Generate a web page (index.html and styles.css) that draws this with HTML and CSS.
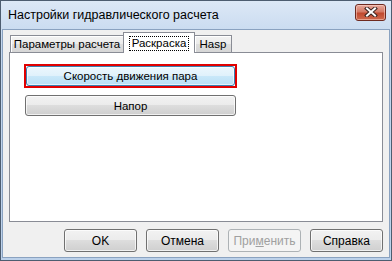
FILE: index.html
```html
<!DOCTYPE html>
<html lang="ru">
<head>
  <meta charset="UTF-8">
  <title>Настройки гидравлического расчета</title>
  <link rel="stylesheet" href="styles.css">
</head>
<body>
  <div class="window">
    <div class="titlebar">
      <span class="title">Настройки гидравлического расчета</span>
      <div class="close-btn">
        <svg width="14" height="10" viewBox="0 0 14 10">
          <path d="M3 1.5 L11 8.5 M11 1.5 L3 8.5" stroke="#3b2420" stroke-width="4" stroke-linecap="square"/>
          <path d="M3 1.5 L11 8.5 M11 1.5 L3 8.5" stroke="#ffffff" stroke-width="2" stroke-linecap="square"/>
        </svg>
      </div>
    </div>
    <div class="client">
      <div class="tabs">
        <div class="tab tab-first">Параметры расчета</div>
        <div class="tab tab-active"><span class="focus">Раскраска</span></div>
        <div class="tab tab-last">Hasp</div>
      </div>
      <div class="panel">
        <div class="marked"><button class="btn btn-wide btn-hot">Скорость движения пара</button></div>
        <button class="btn btn-wide btn-second">Напор</button>
      </div>
      <div class="actions">
        <button class="btn btn-action">OK</button>
        <button class="btn btn-action">Отмена</button>
        <button class="btn btn-action btn-disabled">При<u>м</u>енить</button>
        <button class="btn btn-action">Справка</button>
      </div>
    </div>
  </div>
</body>
</html>
```

FILE: styles.css
```css
body {
  margin: 0;
  font-family: 'Liberation Sans', Arial, sans-serif;
  font-size: 11px;
  color: #000;
}
.window {
  width: 392px;
  height: 261px;
  box-sizing: border-box;
  border: 1px solid #4d5d70;
  padding: 0 1px 2px 1px;
  background: linear-gradient(#dce8f6, #c4d7ee 40px, #bcd1ea);
  display: flex;
  flex-direction: column;
}
.titlebar {
  height: 28px;
  display: flex;
  align-items: center;
  justify-content: space-between;
  padding: 0 4px 0 6px;
}
.title {
  font-size: 12.5px;
  margin-top: -1px;
}
.close-btn {
  width: 29px;
  height: 15px;
  margin-top: -6px;
  border: 1px solid #6e2a20;
  border-radius: 3px;
  background: linear-gradient(#e8a99c, #d47a66 45%, #c0492f 55%, #cf6a4e);
  box-shadow: inset 0 0 0 1px rgba(255, 220, 210, 0.5);
  display: flex;
  align-items: center;
  justify-content: center;
}
.client {
  flex: 1;
  background: #f0f0f0;
  border: 1px solid #8aa2c0;
  padding: 2px 6px 0 6px;
  display: flex;
  flex-direction: column;
}
.tabs {
  display: flex;
  align-items: flex-end;
  height: 20px;
  padding-left: 1px;
  position: relative;
  z-index: 1;
}
.tab {
  box-sizing: border-box;
  height: 17px;
  border: 1px solid #898c95;
  border-bottom: none;
  background: linear-gradient(#f3f3f3, #ebebeb 50%, #dedede 50%, #d6d6d6);
  box-shadow: inset 1px 1px 0 #fff;
  text-align: center;
  line-height: 16px;
  font-size: 11.5px;
}
.tab-first {
  width: 114px;
}
.tab-active {
  width: 72px;
  height: 21px;
  margin-left: -1px;
  margin-bottom: -1px;
  background: #fff;
  box-shadow: none;
  padding-top: 3px;
  line-height: 13px;
}
.tab-last {
  width: 38px;
  margin-left: -1px;
}
.focus {
  display: inline-block;
  border: 1px dotted #000;
  padding: 0 2px;
}
.panel {
  box-sizing: border-box;
  height: 170px;
  border: 1px solid #898c95;
  background: #fff;
  padding: 11px 0 0 15px;
  display: flex;
  flex-direction: column;
  gap: 7px;
}
.btn {
  box-sizing: border-box;
  font-family: 'Liberation Sans', Arial, sans-serif;
  font-size: 11.5px;
  color: #000;
  border: 1px solid #707070;
  border-radius: 3px;
  background: linear-gradient(#f2f2f2, #ebebeb 50%, #dddddd 50%, #cfcfcf);
  box-shadow: inset 0 0 0 1px rgba(255, 255, 255, 0.7);
  padding: 0;
}
.marked {
  width: 213px;
  height: 24px;
  margin-left: -1px;
  box-sizing: border-box;
  border: 2px solid #e00000;
}
.btn-wide {
  width: 211px;
  height: 20px;
}
.btn-hot {
  width: 209px;
  border-color: #3c7fb1;
  background: linear-gradient(#ecf7fd, #dff1fb 50%, #c9e8f9 50%, #b9dff5);
  box-shadow: inset 0 0 0 1px rgba(255, 255, 255, 0.6);
}
.btn-second {
  height: 21px;
}
.actions {
  display: flex;
  justify-content: flex-end;
  gap: 9px;
  margin-top: 7px;
}
.btn-action {
  width: 73px;
  height: 23px;
  font-size: 12px;
}
.btn-disabled {
  color: #a0a0a0;
  border-color: #adb2b5;
  background: #f4f4f4;
  box-shadow: none;
}
```
